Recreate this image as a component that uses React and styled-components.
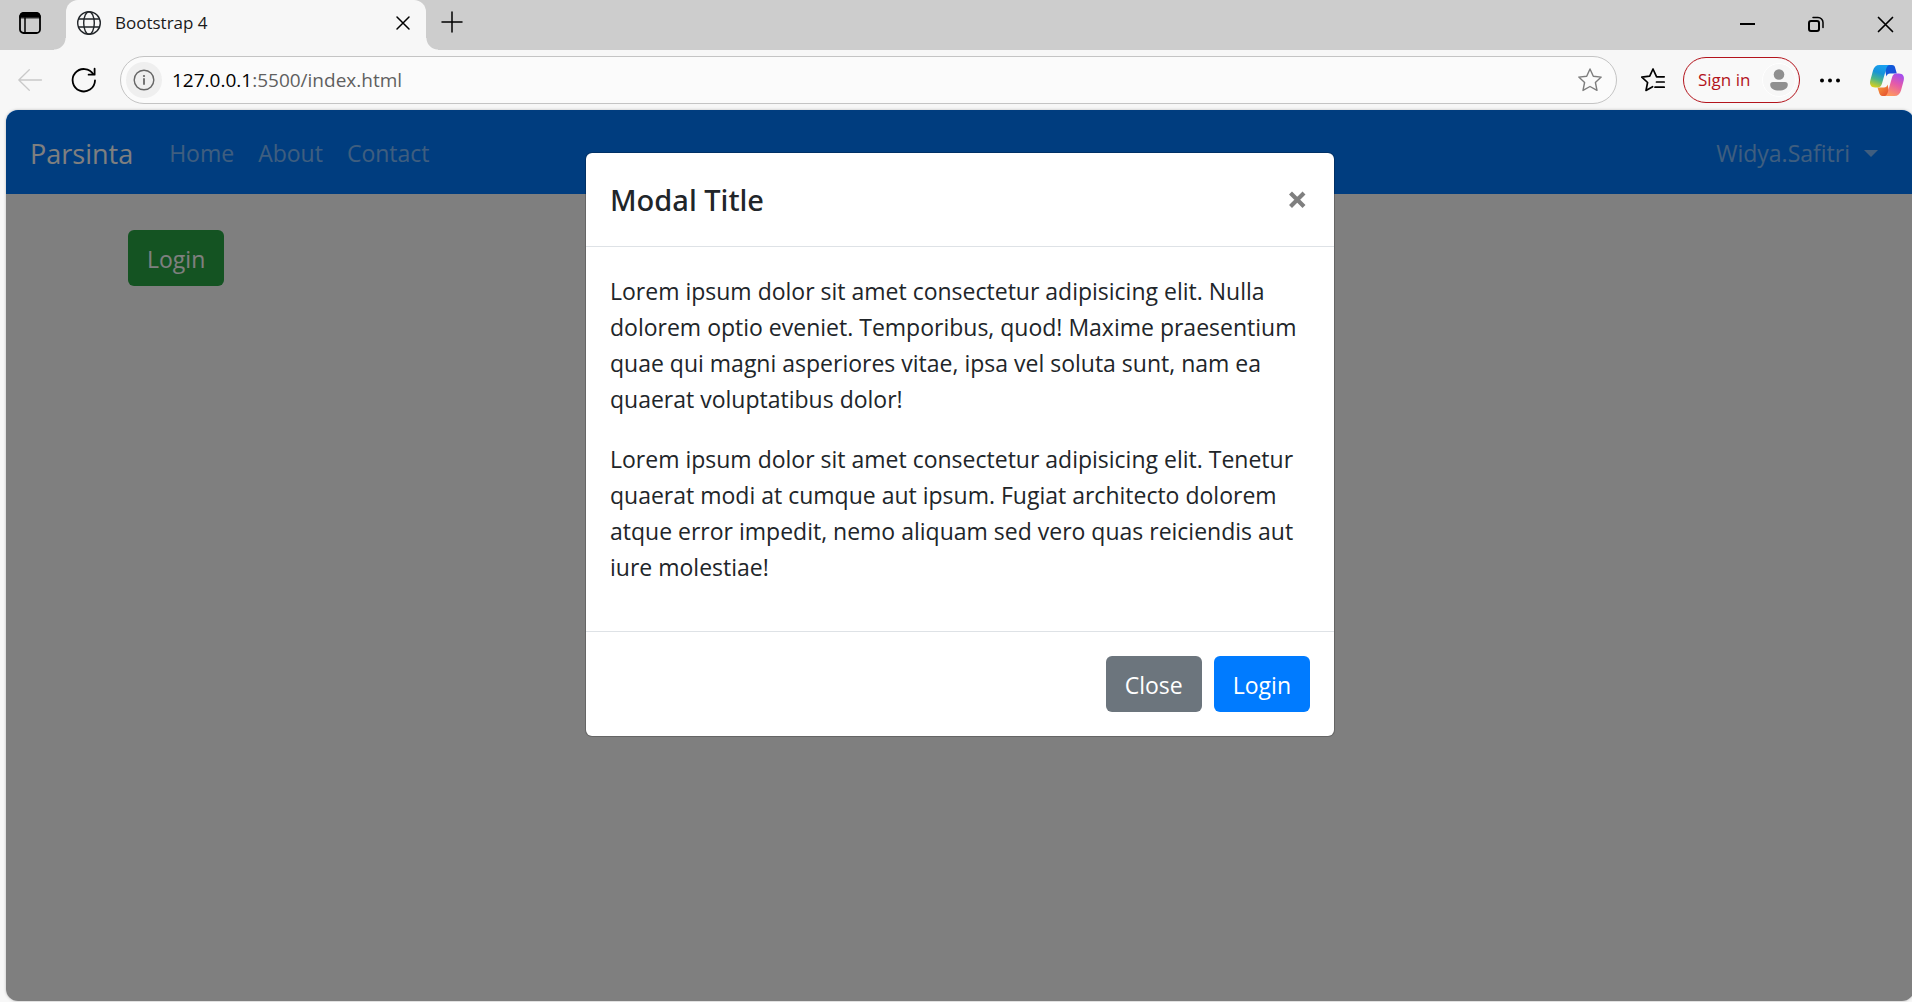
import React, { useState } from "react";
import styled, { createGlobalStyle, css } from "styled-components";

const GlobalStyle = createGlobalStyle`
  *, *::before, *::after { box-sizing: border-box; }
  body {
    margin: 0;
    overflow: hidden;
    background: #f7f7f7;
    color: #212529;
    font-family: "Open Sans", "Noto Sans", sans-serif;
    font-size: 23px;
    line-height: 36px;
  }
  button, input { font-family: inherit; }
  button { cursor: pointer; }
`;

/* ---------- browser window ---------- */

const Window = styled.div`
  display: flex;
  flex-direction: column;
  height: 100vh;
  padding-bottom: 1px;
`;

const TabStrip = styled.header`
  display: flex;
  height: 50px;
  padding-right: 2px;
  background: #cdcdcd;
`;

const IconButton = styled.button`
  display: flex;
  flex: none;
  align-items: center;
  justify-content: center;
  width: ${(p) => p.$width || 24}px;
  height: ${(p) => p.$height || 24}px;
  padding: 0;
  border: 0;
  background: none;
  color: ${(p) => p.$color || "#000"};

  svg { display: block; overflow: visible; }
`;

const TabMenu = styled.div`
  display: flex;
  flex: none;
  width: 66px;
  padding: 11px 0 0 18px;
`;

const Tab = styled.div`
  position: relative;
  display: flex;
  flex: none;
  align-items: center;
  width: 360px;
  padding: 0 11px 4px;
  border-radius: 12px 12px 0 0;
  background: #f7f7f7;

  &::before,
  &::after {
    content: "";
    position: absolute;
    bottom: 0;
    width: 12px;
    height: 12px;
  }
  &::before {
    right: 100%;
    background: radial-gradient(circle at 0 0, transparent 11px, #f7f7f7 12px);
  }
  &::after {
    left: 100%;
    background: radial-gradient(circle at 100% 0, transparent 11px, #f7f7f7 12px);
  }
`;

const TabTitle = styled.span`
  flex: 1;
  margin-left: 14px;
  color: #1a1a1a;
  font-size: 17px;
  line-height: 24px;
`;

const NewTab = styled.div`
  flex: 1;
  padding: 10px 0 0 14px;
`;

const WindowControls = styled.div`
  display: flex;
  align-items: center;
  gap: 21px;
`;

const Toolbar = styled.nav`
  display: flex;
  flex: none;
  align-items: center;
  height: 60px;
  padding: 0 8px 0 18px;
`;

const NavButtons = styled.div`
  display: flex;
  gap: 30px;
  margin-right: 24px;
`;

const AddressBar = styled.div`
  display: flex;
  flex: 1;
  align-items: center;
  height: 48px;
  padding: 0 14px 0 5px;
  border: 1px solid #c4c4c4;
  border-radius: 24px;
  background: #fbfbfb;
`;

const SiteInfo = styled(IconButton)`
  border-radius: 50%;
  background: #efefef;
`;

const Url = styled.span`
  flex: 1;
  margin-left: 10px;
  color: #5f5f5f;
  font-size: 19px;
  line-height: 28px;

  b { color: #000; font-weight: 400; }
`;

const Actions = styled.div`
  display: flex;
  align-items: center;
  gap: 18px;
  margin-left: 24px;
`;

const CopilotButton = styled(IconButton)`
  margin-left: 10px;
`;

const SignIn = styled.button`
  display: flex;
  align-items: center;
  justify-content: space-between;
  width: 117px;
  height: 46px;
  padding: 0 3px 0 14px;
  border: 1px solid #b3141c;
  border-radius: 23px;
  background: #f9f9f9;
  color: #b3141c;
  font-size: 17px;
  line-height: 24px;
`;

const Avatar = styled.span`
  display: flex;
  align-items: center;
  justify-content: center;
  width: 34px;
  height: 34px;
  border: 1px solid #fff;
  border-radius: 50%;
  background: #f7f7f7;
`;

/* ---------- web page ---------- */

const Page = styled.main`
  position: relative;
  flex: 1;
  margin: 0 -2px 0 6px;
  overflow: hidden;
  border-radius: 12px;
  background: #fff;
  box-shadow: 0 0 3px rgba(0, 0, 0, 0.25);
`;

const Navbar = styled.nav`
  display: flex;
  align-items: center;
  height: 84px;
  padding: 2px 26px 0 24px;
  background: #007bff;
`;

const Brand = styled.a`
  margin-right: 24px;
  color: #fff;
  font-size: 27px;
  line-height: 45px;
  text-decoration: none;
`;

const NavList = styled.ul`
  display: flex;
  margin: 0;
  padding: 0;
  list-style: none;

  &:last-child { margin-left: auto; }
`;

const NavLink = styled.a`
  display: flex;
  align-items: center;
  padding: 12px;
  color: rgba(255, 255, 255, 0.5);
  font-size: 23px;
  text-decoration: none;

  ${(p) =>
    p.$dropdown &&
    css`
      padding-right: 10px;

      &::after {
        content: "";
        margin-left: 14px;
        border: 7px solid transparent;
        border-top-color: currentColor;
        border-bottom: 0;
      }
    `}
`;

const Container = styled.div`
  max-width: 1710px;
  margin: 36px auto 0;
  padding: 0 23px;
`;

const variants = {
  success: "#28a745",
  secondary: "#6c757d",
  primary: "#007bff",
};

const Button = styled.button`
  padding: 11px 19px 9px;
  border: 0;
  border-radius: 6px;
  background: ${(p) => variants[p.$variant]};
  color: #fff;
  font-size: 23px;
  line-height: 36px;
`;

const Backdrop = styled.div`
  position: absolute;
  inset: 0;
  padding: 42px 12px;
  background: rgba(0, 0, 0, 0.5);
`;

const Dialog = styled.section`
  max-width: 750px;
  margin: 0 auto;
  border: 1px solid rgba(0, 0, 0, 0.2);
  border-radius: 7px;
  background: #fff;
  background-clip: padding-box;
`;

const DialogHeader = styled.header`
  display: flex;
  align-items: center;
  justify-content: space-between;
  padding: 24px;
  border-bottom: 1px solid #dee2e6;
`;

const DialogTitle = styled.h5`
  margin: 0;
  font-family: "Noto Sans", sans-serif;
  font-size: 29px;
  font-weight: 500;
  line-height: 45px;
`;

const DialogBody = styled.div`
  padding: 26px 24px 22px;

  p { margin: 0 0 24px; }
`;

const DialogFooter = styled.footer`
  display: flex;
  justify-content: flex-end;
  gap: 12px;
  padding: 24px;
  border-top: 1px solid #dee2e6;
`;

/* ---------- icons ---------- */

const Icon = ({ size = 24, width = 1.5, children }) => (
  <svg width={size} height={size} viewBox={`0 0 ${size} ${size}`} fill="none" stroke="currentColor" strokeWidth={width} strokeLinecap="round" strokeLinejoin="round" aria-hidden="true">
    {children}
  </svg>
);

const TabMenuIcon = () => (
  <Icon width={1.8}>
    <rect x="2" y="2" width="20" height="20" rx="3.5" />
    <path d="M2 6.5V5a3 3 0 0 1 3-3h14a3 3 0 0 1 3 3v1.5z" fill="currentColor" strokeWidth="1" />
    <path d="M7 7v15" strokeWidth="1.5" />
  </Icon>
);

const GlobeIcon = () => (
  <Icon width={1.4}>
    <circle cx="12" cy="12" r="11.3" />
    <ellipse cx="12" cy="12" rx="5.3" ry="11.3" />
    <path d="M1.6 8h20.8M1.6 16h20.8" />
  </Icon>
);

const BackIcon = () => (
  <Icon width={1.3}>
    <path d="M23.5 12H.8M11.3 1.7L.8 12l10.5 10.3" />
  </Icon>
);

const ReloadIcon = () => (
  <Icon width={1.8}>
    <path d="M23 12.5A11.2 11.2 0 1 1 21.5 6.6M22.6.7v6h-6" />
  </Icon>
);

const InfoIcon = () => (
  <Icon width={1.4}>
    <circle cx="12" cy="12" r="9.8" />
    <path d="M12 11v5" strokeWidth="1.8" />
    <circle cx="12" cy="8" r="1.1" fill="currentColor" stroke="none" />
  </Icon>
);

const StarIcon = () => (
  <Icon width={1.4}>
    <path d="M12 1l3.3 7.2 7.9.9-5.8 5.4 1.6 7.9-7-3.9-7 3.9 1.6-7.9L.8 9.1l7.9-.9z" />
  </Icon>
);

const FavoritesIcon = () => (
  <Icon width={1.7}>
    <path d="M23.2 8.8H15.6L12 1 8.7 8.2.8 9.1l5.8 5.4L5 22.4l6.6-3.7M15.5 14h7.7M14 19.2h9.2" />
  </Icon>
);

const PersonIcon = () => (
  <svg width="18" height="22" viewBox="0 0 18 22" fill="#8f8f8f" aria-hidden="true">
    <circle cx="9" cy="5.5" r="5.3" />
    <path d="M3 13h12a2.8 2.8 0 0 1 2.8 2.8C17.8 19.5 14 21.6 9 21.6S.2 19.5.2 15.8A2.8 2.8 0 0 1 3 13z" />
  </svg>
);

const DotsIcon = () => (
  <svg width="24" height="24" viewBox="0 0 24 24" fill="currentColor" aria-hidden="true">
    <circle cx="4" cy="12.5" r="2" />
    <circle cx="12" cy="12.5" r="2" />
    <circle cx="20" cy="12.5" r="2" />
  </svg>
);

const CopilotIcon = () => (
  <svg width="34" height="31" viewBox="0 0 34 31" aria-hidden="true">
    <defs>
      <linearGradient id="cpLeft" x1="0.6" y1="0" x2="0.3" y2="1">
        <stop offset="0" stopColor="#18a0f0" />
        <stop offset="0.35" stopColor="#1793d8" />
        <stop offset="0.65" stopColor="#4bb58a" />
        <stop offset="1" stopColor="#d9cf1c" />
      </linearGradient>
      <linearGradient id="cpTop" x1="0" y1="0" x2="1" y2="1">
        <stop offset="0" stopColor="#0a62d8" />
        <stop offset="1" stopColor="#1f49dc" />
      </linearGradient>
      <linearGradient id="cpRight" x1="0.7" y1="0" x2="0.3" y2="1">
        <stop offset="0" stopColor="#a44dee" />
        <stop offset="0.45" stopColor="#e55aa9" />
        <stop offset="1" stopColor="#ff9a5c" />
      </linearGradient>
      <linearGradient id="cpBottom" x1="0" y1="0" x2="1" y2="1">
        <stop offset="0" stopColor="#f9a13a" />
        <stop offset="1" stopColor="#e2452f" />
      </linearGradient>
    </defs>
    <path d="M14 0h8c2 0 2.800 1.200 3.300 3.200L26.800 8.500H20c-2 0-3 1-3.600 3z" fill="url(#cpTop)" />
    <path d="M20 31h-7.500c-2 0-2.800-1.200-3.300-3.200L7.500 22.500h6.500c2 0 3-1 3.600-3z" fill="url(#cpBottom)" />
    <path d="M9.500 0h9.700c-1.700.6-2.500 2-3.200 4.500L12 18.500c-.8 2.800-2 4-4.500 4H5.200c-4 0-6-2.800-4.900-7L3 5.500C4 2 6 0 9.500 0z" fill="url(#cpLeft)" />
    <path d="M24.500 31h-9.700c1.700-.6 2.500-2 3.200-4.500l4-14c.8-2.800 2-4 4.500-4h2.300c4 0 6 2.800 4.900 7l-2.700 10c-1 3.500-3 5.500-6.500 5.500z" fill="url(#cpRight)" />
  </svg>
);

const pageLinks = ["Home", "About", "Contact"];

const paragraphs = [
  "Lorem ipsum dolor sit amet consectetur adipisicing elit. Nulla dolorem optio eveniet. Temporibus, quod! Maxime praesentium quae qui magni asperiores vitae, ipsa vel soluta sunt, nam ea quaerat voluptatibus dolor!",
  "Lorem ipsum dolor sit amet consectetur adipisicing elit. Tenetur quaerat modi at cumque aut ipsum. Fugiat architecto dolorem atque error impedit, nemo aliquam sed vero quas reiciendis aut iure molestiae!",
];

function BrowserChrome() {
  return (
    <>
      <TabStrip>
        <TabMenu>
          <IconButton aria-label="Tab actions"><TabMenuIcon /></IconButton>
        </TabMenu>
        <Tab>
          <GlobeIcon />
          <TabTitle>Bootstrap 4</TabTitle>
          <IconButton aria-label="Close tab">
            <Icon><path d="M6 6l12 12M18 6L6 18" /></Icon>
          </IconButton>
        </Tab>
        <NewTab>
          <IconButton aria-label="New tab">
            <Icon><path d="M12 2v20M2 12h20" /></Icon>
          </IconButton>
        </NewTab>
        <WindowControls>
          <IconButton $width={48} $height={48} aria-label="Minimize">
            <Icon width={2}><path d="M4 11h15" strokeLinecap="butt" /></Icon>
          </IconButton>
          <IconButton $width={48} $height={48} aria-label="Restore">
            <Icon width={2}>
              <rect x="4" y="8" width="10" height="10" rx="2" />
              <path d="M8 4.5h5a5 5 0 0 1 5 5v5" strokeWidth="1.500" />
            </Icon>
          </IconButton>
          <IconButton $width={48} $height={48} aria-label="Close window">
            <Icon width={1.7}><path d="M4.500 4.500l14 14M18.500 4.500l-14 14" /></Icon>
          </IconButton>
        </WindowControls>
      </TabStrip>
      <Toolbar>
        <NavButtons>
          <IconButton $color="#c9c9c9" aria-label="Back"><BackIcon /></IconButton>
          <IconButton aria-label="Refresh"><ReloadIcon /></IconButton>
        </NavButtons>
        <AddressBar>
          <SiteInfo $width={36} $height={36} $color="#666" aria-label="Site information"><InfoIcon /></SiteInfo>
          <Url><b>127.0.0.1</b>:5500/index.html</Url>
          <IconButton $color="#7d7d7d" aria-label="Add to favorites"><StarIcon /></IconButton>
        </AddressBar>
        <Actions>
          <IconButton aria-label="Favorites"><FavoritesIcon /></IconButton>
          <SignIn>Sign in<Avatar><PersonIcon /></Avatar></SignIn>
          <IconButton aria-label="Settings and more"><DotsIcon /></IconButton>
          <CopilotButton $width={34} $height={32} aria-label="Copilot"><CopilotIcon /></CopilotButton>
        </Actions>
      </Toolbar>
    </>
  );
}

export default function App() {
  const [open, setOpen] = useState(true);
  const close = () => setOpen(false);

  return (
    <Window>
      <GlobalStyle />
      <BrowserChrome />
      <Page>
        <Navbar>
          <Brand href="#">Parsinta</Brand>
          <NavList>
            {pageLinks.map((label) => (
              <li key={label}><NavLink href="#">{label}</NavLink></li>
            ))}
          </NavList>
          <NavList>
            <li><NavLink href="#" $dropdown>Widya.Safitri</NavLink></li>
          </NavList>
        </Navbar>
        <Container>
          <Button $variant="success" onClick={() => setOpen(true)}>Login</Button>
        </Container>
        {open && (
          <Backdrop>
            <Dialog role="dialog" aria-modal="true" aria-labelledby="modal-title">
              <DialogHeader>
                <DialogTitle id="modal-title">Modal Title</DialogTitle>
                <IconButton $color="#7f7f7f" aria-label="Close" onClick={close}>
                  <Icon width={4.2}><path d="M4.500 5l13.500 13.500M18 5L4.500 18.500" strokeLinecap="butt" /></Icon>
                </IconButton>
              </DialogHeader>
              <DialogBody>
                {paragraphs.map((text) => <p key={text}>{text}</p>)}
              </DialogBody>
              <DialogFooter>
                <Button $variant="secondary" onClick={close}>Close</Button>
                <Button $variant="primary">Login</Button>
              </DialogFooter>
            </Dialog>
          </Backdrop>
        )}
      </Page>
    </Window>
  );
}
